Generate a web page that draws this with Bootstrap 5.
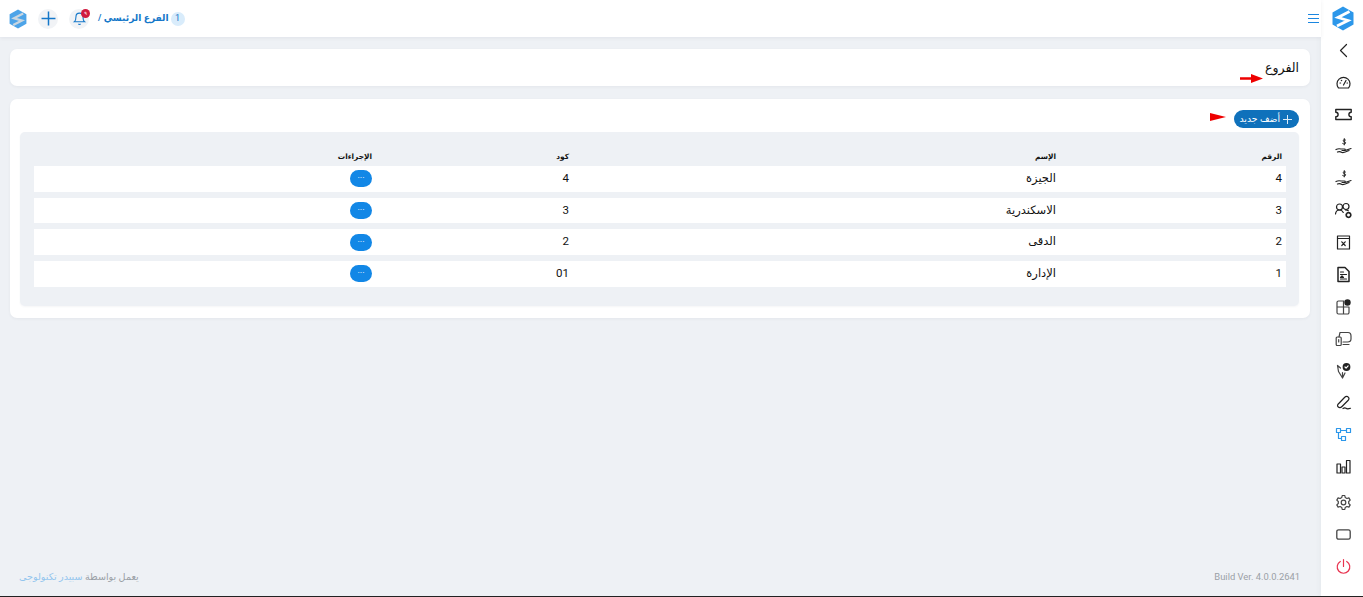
<!DOCTYPE html>
<html lang="ar" dir="rtl">
<head>
    <meta charset="UTF-8">
    <meta name="viewport" content="width=device-width, initial-scale=1.0">
    <title>الفروع</title>
    <link href="https://cdn.jsdelivr.net/npm/bootstrap@5.3.2/dist/css/bootstrap.min.css" rel="stylesheet">
    <style>
        html, body { height: 100%; }
        body { background: #eef1f5; font-family: Roboto, "DejaVu Sans", sans-serif; color: #111; overflow: hidden; border-bottom: 1px solid #222; }
        .app-shell { height: 596px; }
        .side-rail { width: 42px; flex: 0 0 42px; background: #fff; box-shadow: 0 0 6px rgba(60,70,90,.07); }
        .rail-logo { height: 37px; padding-left: 2px; }
        .rail-items { margin-top: -3px; }
        .rail-btn { height: 32px; width: 42px; padding-left: 2px; color: #222; }
        .rail-btn svg { width: 17px; height: 17px; fill: none; stroke: currentColor; stroke-width: 1.2; stroke-linecap: round; stroke-linejoin: round; }
        .top-strip { height: 37px; background: #fff; box-shadow: 0 1px 4px rgba(60,70,90,.08); padding: 0 2px 0 9px; }
        .burger { width: 11px; height: 9px; border-top: 1px solid #1a86e0; border-bottom: 1px solid #1a86e0; position: relative; }
        .burger::after { content: ""; position: absolute; top: 3px; left: 0; right: 0; border-top: 1px solid #1a86e0; }
        .branch-pill { color: #1477c9; font-size: 9.1px; font-weight: 700; gap: 2px; margin-left: 9px; }
        .branch-num { width: 14px; height: 14px; border-radius: 50%; background: #d9ecfb; font-size: 9px; font-weight: 400; }
        .round-tool { width: 20px; height: 20px; border-radius: 50%; background: #f1f3f6; color: #1477c9; margin-left: 11px; }
        .round-tool svg { width: 15px; height: 15px; }
        .bell-dot { position: absolute; top: 0; right: -1px; width: 9px; height: 9px; border-radius: 50%; background: #d11a3f; color: #fff; font-size: 5px; line-height: 9px; text-align: center; }
        .main-col { min-width: 0; }
        .page-area { padding: 12px 11px 0 10px; }
        .head-card { height: 37px; background: #fff; border-radius: 7px; box-shadow: 0 1px 3px rgba(60,70,90,.06); padding: 0 11px; }
        .head-title { font-size: 12.5px; font-weight: 400; margin: 0; color: #111; }
        .body-card { height: 219px; margin-top: 13px; background: #fff; border-radius: 7px; box-shadow: 0 1px 3px rgba(60,70,90,.06); padding: 11px 11px 12px 10px; }
        .add-btn { height: 18px; width: 65px; padding: 0 7px 0 0; border-radius: 9px; background: #0f71bb; color: #fff; font-size: 9.3px; gap: 3px; border: 0; }
        .add-btn svg { width: 9px; height: 9px; flex: none; }
        .grid-panel { height: 174px; margin-top: 4px; background: #eef1f5; border-radius: 5px; padding: 17px 13px 0 14px; box-shadow: 0 1px 2px rgba(60,70,90,.05); }
        .rows-table { width: 1252px; table-layout: fixed; border-collapse: separate; border-spacing: 0; font-size: 11.5px; color: #111; }
        .rows-table th { font-size: 7.4px; font-weight: 700; padding: 1px 4px 0; height: 17px; vertical-align: top; line-height: 13px; text-align: right; }
        .rows-table td { background: #fff; height: 25.7px; padding: 0 4px; vertical-align: middle; text-align: right; line-height: 1; }
        .gap-row td { height: 6px; background: transparent; padding: 0; }
        .more-btn { width: 22px; height: 17px; border-radius: 9px; background: #1287e6; color: #fff; border: 0; font-size: 9px; line-height: 17px; padding: 0; display: block; }
        .foot-line { margin-top: auto; height: 44px; padding: 6px 21px 0 19px; font-size: 9.6px; color: #9aa0a6; }
        .foot-build { font-size: 9.4px; }
        .foot-link { color: #92c5ee; }
        .flag-arrow { position: absolute; }
        .muted-ico { color: #444; }
    </style>
</head>
<body>

<div class="app-shell d-flex">

    <!-- right rail -->
    <div class="side-rail d-flex flex-column align-items-center">
        <div class="rail-logo d-flex align-items-center justify-content-center">
            <svg width="22" height="25" viewBox="0 0 22 25"><path d="M11 .5 21.500 6.500v12L11 24.500.5 18.500v-12z" fill="#2c97ea"/><path d="M17.500 5.500 6 11.500 16 14.500 5 20" fill="none" stroke="#fff" stroke-width="2.800"/></svg>
        </div>
        <div class="rail-items d-flex flex-column align-items-center">
            <div class="rail-btn d-flex align-items-center justify-content-center"><svg viewBox="0 0 17 17"><path d="M11.500 2.500 5.500 8.500l6 6"/></svg></div>
            <div class="rail-btn d-flex align-items-center justify-content-center"><svg viewBox="0 0 17 17"><path d="M3.500 14a6.500 6.500 0 1 1 10 0z"/><path d="M8.500 11 11 6.500M5 9h.6M12 9h.5M6.300 6.300l.4.4"/></svg></div>
            <div class="rail-btn d-flex align-items-center justify-content-center"><svg viewBox="0 0 17 17"><path d="M.8 3.500h15.400v2.700a2 2 0 0 0 0 4.600v2.700H.8v-2.700a2 2 0 0 0 0-4.600z" stroke-width="1.400"/></svg></div>
            <div class="rail-btn d-flex align-items-center justify-content-center"><svg viewBox="0 0 17 17"><path d="M1 11.500c2-1 3-1 5-.5h3.500c1 0 1 1.500 0 1.500H7M10 12.500l6-2M2.500 14c2-1 3-.5 4.500.5 2.500.5 5-1 7-2"/><path d="M10.500 2C9.300 1.400 7.800 1.900 8.200 3s2.600.7 2.500 1.900-2 1.400-3 .7M9.300 .6v6.300" stroke-width="1"/></svg></div>
            <div class="rail-btn d-flex align-items-center justify-content-center"><svg viewBox="0 0 17 17"><path d="M1 11.500c2-1 3-1 5-.5h3.500c1 0 1 1.500 0 1.500H7M10 12.500l6-2M2.500 14c2-1 3-.5 4.500.5 2.500.5 5-1 7-2"/><path d="M10.500 2C9.300 1.400 7.800 1.900 8.200 3s2.600.7 2.500 1.900-2 1.400-3 .7M9.300 .6v6.300" stroke-width="1"/></svg></div>
            <div class="rail-btn d-flex align-items-center justify-content-center"><svg viewBox="0 0 17 17"><circle cx="4.500" cy="5" r="3"/><path d="M.5 12c.3-2.600 2-4 4-4s3 .8 3.800 2.500"/><circle cx="11" cy="4.500" r="3"/><path d="M10.500 8c1 0 2 .2 2.800.7"/><circle cx="13.500" cy="13" r="2.300" stroke-dasharray="1.500 .6" stroke-width="1.700"/></svg></div>
            <div class="rail-btn d-flex align-items-center justify-content-center"><svg viewBox="0 0 17 17"><rect x="2.500" y="2" width="12" height="13"/><path d="M2.500 4.500h12M6.800 7.800l3.400 3.700M10.200 7.800l-3.400 3.700"/></svg></div>
            <div class="rail-btn d-flex align-items-center justify-content-center"><svg viewBox="0 0 17 17"><path d="M3 1.500h7l4 4v10H3z" stroke-width="1.500"/><path d="M5.500 6h3M5.500 8.500h6M5.500 13h6"/><path d="M5.500 11.500l1.500-1.500 1.500 1.500z" fill="#222"/></svg></div>
            <div class="rail-btn d-flex align-items-center justify-content-center muted-ico"><svg viewBox="0 0 17 17"><path d="M9 3H3.500A1.500 1.500 0 0 0 2 4.500v10A1.500 1.500 0 0 0 3.500 16h9a1.500 1.500 0 0 0 1.500-1.500V9H2M8.500 3.500V16"/><circle cx="12.500" cy="4.500" r="3.200" fill="#222" stroke="none"/></svg></div>
            <div class="rail-btn d-flex align-items-center justify-content-center muted-ico"><svg viewBox="0 0 17 17"><path d="M4 7 5 2.500h8c2 0 3 1.500 3 3.500v3c0 2-1 3-3.500 3H8"/><rect x="1.200" y="7" width="5" height="8.500" rx="1"/><path d="M3.700 9.500v2.500M8 14.500h6"/></svg></div>
            <div class="rail-btn d-flex align-items-center justify-content-center muted-ico"><svg viewBox="0 0 17 17"><path d="M2.500 3.500 3.500 9.500 7.500 16l2.500-5M7.500 16V10.500M2.500 3.500 5.500 6"/><circle cx="11.500" cy="5" r="3.900" fill="#222" stroke="none"/><path d="M10 5l1.100 1.100 2-2.200" stroke="#fff"/></svg></div>
            <div class="rail-btn d-flex align-items-center justify-content-center"><svg viewBox="0 0 17 17"><path d="M2.800 10.500 9.500 3.500c1.500-1.500 3-1.300 3.800-.3 1 1 .7 2.300-.3 3.300L7 12.500c-1.200 1.200-3 1.200-4 .3-.6-.6-.6-1.500-.2-2.300zM8 14.500c1.500-1 2-1 3-.2s2 .8 4.500 0"/></svg></div>
            <div class="rail-btn d-flex align-items-center justify-content-center"><svg viewBox="0 0 17 17" style="color:#2c97ea"><rect x="1.500" y="2.500" width="4" height="4"/><rect x="11.500" y="2.500" width="4" height="4"/><rect x="6.500" y="10.500" width="4" height="4"/><path d="M5.500 4.500h6M3.500 6.500v6h3"/></svg></div>
            <div class="rail-btn d-flex align-items-center justify-content-center"><svg viewBox="0 0 17 17"><rect x="2" y="6" width="3.500" height="9"/><rect x="7" y="9" width="3" height="6"/><rect x="11.500" y="2.500" width="3.500" height="12.500"/></svg></div>
            <div class="rail-btn d-flex align-items-center justify-content-center mt-1 muted-ico"><svg viewBox="0 0 17 17"><circle cx="8.500" cy="8.500" r="2.300"/><path d="M7.200 1.500h2.600l.4 2 1.700 1 2-.6 1.300 2.200-1.500 1.400v2l1.500 1.400-1.300 2.200-2-.6-1.700 1-.4 2H7.200l-.4-2-1.700-1-2 .6-1.300-2.200 1.500-1.400v-2L1.800 6.100l1.300-2.200 2 .6 1.700-1z"/></svg></div>
            <div class="rail-btn d-flex align-items-center justify-content-center muted-ico"><svg viewBox="0 0 17 17"><rect x="1.800" y="3.800" width="13.400" height="9.400" rx="1.800" stroke-width="1.300"/></svg></div>
            <div class="rail-btn d-flex align-items-center justify-content-center"><svg viewBox="0 0 17 17" style="color:#e8334f"><path d="M5.300 3.500a6.300 6.300 0 1 0 6.400 0M8.500 1.500v7"/></svg></div>
        </div>
    </div>

    <!-- main column -->
    <div class="main-col flex-grow-1 d-flex flex-column">
        <div class="top-strip d-flex align-items-center">
            <div class="burger"></div>
            <div class="flex-grow-1"></div>
            <div class="branch-pill d-flex align-items-center">
                <span class="branch-num d-flex align-items-center justify-content-center">1</span>
                <span>الفرع الرئيسي /</span>
            </div>
            <div class="round-tool position-relative d-flex align-items-center justify-content-center">
                <svg viewBox="0 0 14 14" fill="none" stroke="#1477c9" stroke-width="1"><path d="M7 2a3.300 3.300 0 0 0-3.300 3.300c0 3.700-1.400 4.700-1.400 4.700h9.400s-1.400-1-1.400-4.700A3.300 3.300 0 0 0 7 2zM6 12a1.200 1.200 0 0 0 2 0"/></svg>
                <span class="bell-dot">٩</span>
            </div>
            <div class="round-tool d-flex align-items-center justify-content-center">
                <svg viewBox="0 0 14 14" fill="none" stroke="#1477c9" stroke-width="1.400"><path d="M7 .5v13M.5 7h13"/></svg>
            </div>
            <div class="d-flex align-items-center">
                <svg width="18" height="20" viewBox="0 0 22 25"><path d="M11 .5 21.500 6.500v12L11 24.500.5 18.500v-12z" fill="#4da4e8"/><path d="M17.500 5.500 6 11.500 16 14.500 5 20" fill="none" stroke="#c9d6e0" stroke-width="2.800"/></svg>
            </div>
        </div>

        <div class="page-area">
            <div class="head-card d-flex align-items-center position-relative">
                <h1 class="head-title">الفروع</h1>
                <svg class="flag-arrow" style="right:47px;top:25px" width="23" height="9" viewBox="0 0 23 9"><path d="M0 3.300h11V0l12 4.500L11 9V5.700H0z" fill="#ee0000"/></svg>
            </div>
            <div class="body-card">
                <div class="position-relative">
                    <button class="add-btn d-flex align-items-center" type="button">
                        <svg viewBox="0 0 9 9" fill="none" stroke="#dcecf8"><path d="M4.500 0v9M0 4.500h9"/></svg>
                        <span>أضف جديد</span>
                    </button>
                    <svg class="flag-arrow" style="right:73px;top:3px" width="16" height="8" viewBox="0 0 16 8"><path d="M0 0l16 4L0 8z" fill="#ee0000"/></svg>
                </div>
                <div class="grid-panel">
                    <table class="rows-table">
                        <colgroup><col style="width:226px"><col style="width:487px"><col style="width:197px"><col></colgroup>
                        <thead><tr><th>الرقم</th><th>الإسم</th><th>كود</th><th>الإجراءات</th></tr></thead>
                        <tbody id="branchRows"></tbody>
                    </table>
                </div>
            </div>
        </div>

        <div class="foot-line d-flex align-items-center justify-content-between">
            <span class="foot-build" dir="ltr">Build Ver. 4.0.0.2641</span>
            <span>يعمل بواسطة <span class="foot-link">سبيدر تكنولوجى</span></span>
        </div>
    </div>
</div>

<script>
    // Branch rows
    const branches = [
        { id: 4, name: "الجيزة", code: "4" },
        { id: 3, name: "الاسكندرية", code: "3" },
        { id: 2, name: "الدقى", code: "2" },
        { id: 1, name: "الإدارة", code: "01" }
    ];
    const tableBody = document.getElementById("branchRows");
    branches.forEach((branch, i) => {
        if (i > 0) tableBody.innerHTML += `<tr class="gap-row"><td colspan="4"></td></tr>`;
        tableBody.innerHTML += `<tr>
            <td>${branch.id}</td>
            <td>${branch.name}</td>
            <td>${branch.code}</td>
            <td><button class="more-btn" type="button">&middot;&middot;&middot;</button></td>
        </tr>`;
    });
</script>
<script src="https://cdn.jsdelivr.net/npm/bootstrap@5.3.2/dist/js/bootstrap.bundle.min.js"></script>
</body>
</html>
